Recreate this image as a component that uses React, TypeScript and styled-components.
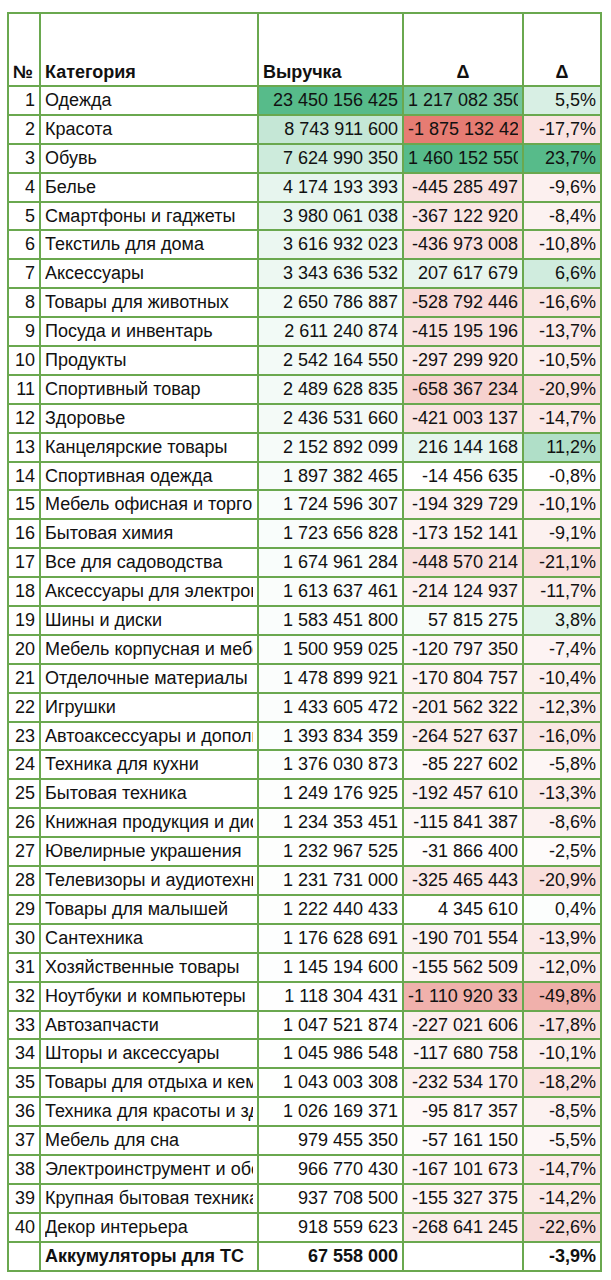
import { createGlobalStyle, styled } from 'styled-components'

type Row = [string, number, string, number, string, number]

// категория / выручка / Δ / Δ% — the numeric copies drive the colour scales
const rows: Row[] = [
  ['Одежда', 23450156425, '1 217 082 350', 1217082350, '5,5%', 5.5],
  ['Красота', 8743911600, '-1 875 132 425', -1875132425, '-17,7%', -17.7],
  ['Обувь', 7624990350, '1 460 152 550', 1460152550, '23,7%', 23.7],
  ['Белье', 4174193393, '-445 285 497', -445285497, '-9,6%', -9.6],
  ['Смартфоны и гаджеты', 3980061038, '-367 122 920', -367122920, '-8,4%', -8.4],
  ['Текстиль для дома', 3616932023, '-436 973 008', -436973008, '-10,8%', -10.8],
  ['Аксессуары', 3343636532, '207 617 679', 207617679, '6,6%', 6.6],
  ['Товары для животных', 2650786887, '-528 792 446', -528792446, '-16,6%', -16.6],
  ['Посуда и инвентарь', 2611240874, '-415 195 196', -415195196, '-13,7%', -13.7],
  ['Продукты', 2542164550, '-297 299 920', -297299920, '-10,5%', -10.5],
  ['Спортивный товар', 2489628835, '-658 367 234', -658367234, '-20,9%', -20.9],
  ['Здоровье', 2436531660, '-421 003 137', -421003137, '-14,7%', -14.7],
  ['Канцелярские товары', 2152892099, '216 144 168', 216144168, '11,2%', 11.2],
  ['Спортивная одежда', 1897382465, '-14 456 635', -14456635, '-0,8%', -0.8],
  ['Мебель офисная и торговая', 1724596307, '-194 329 729', -194329729, '-10,1%', -10.1],
  ['Бытовая химия', 1723656828, '-173 152 141', -173152141, '-9,1%', -9.1],
  ['Все для садоводства', 1674961284, '-448 570 214', -448570214, '-21,1%', -21.1],
  ['Аксессуары для электроники', 1613637461, '-214 124 937', -214124937, '-11,7%', -11.7],
  ['Шины и диски', 1583451800, '57 815 275', 57815275, '3,8%', 3.8],
  ['Мебель корпусная и мебель', 1500959025, '-120 797 350', -120797350, '-7,4%', -7.4],
  ['Отделочные материалы', 1478899921, '-170 804 757', -170804757, '-10,4%', -10.4],
  ['Игрушки', 1433605472, '-201 562 322', -201562322, '-12,3%', -12.3],
  ['Автоаксессуары и дополнительное оборудование', 1393834359, '-264 527 637', -264527637, '-16,0%', -16.0],
  ['Техника для кухни', 1376030873, '-85 227 602', -85227602, '-5,8%', -5.8],
  ['Бытовая техника', 1249176925, '-192 457 610', -192457610, '-13,3%', -13.3],
  ['Книжная продукция и диски', 1234353451, '-115 841 387', -115841387, '-8,6%', -8.6],
  ['Ювелирные украшения', 1232967525, '-31 866 400', -31866400, '-2,5%', -2.5],
  ['Телевизоры и аудиотехника', 1231731000, '-325 465 443', -325465443, '-20,9%', -20.9],
  ['Товары для малышей', 1222440433, '4 345 610', 4345610, '0,4%', 0.4],
  ['Сантехника', 1176628691, '-190 701 554', -190701554, '-13,9%', -13.9],
  ['Хозяйственные товары', 1145194600, '-155 562 509', -155562509, '-12,0%', -12.0],
  ['Ноутбуки и компьютеры', 1118304431, '-1 110 920 337', -1110920337, '-49,8%', -49.8],
  ['Автозапчасти', 1047521874, '-227 021 606', -227021606, '-17,8%', -17.8],
  ['Шторы и аксессуары', 1045986548, '-117 680 758', -117680758, '-10,1%', -10.1],
  ['Товары для отдыха и кемпинга', 1043003308, '-232 534 170', -232534170, '-18,2%', -18.2],
  ['Техника для красоты и здоровья', 1026169371, '-95 817 357', -95817357, '-8,5%', -8.5],
  ['Мебель для сна', 979455350, '-57 161 150', -57161150, '-5,5%', -5.5],
  ['Электроинструмент и оборудование', 966770430, '-167 101 673', -167101673, '-14,7%', -14.7],
  ['Крупная бытовая техника', 937708500, '-155 327 375', -155327375, '-14,2%', -14.2],
  ['Декор интерьера', 918559623, '-268 641 245', -268641245, '-22,6%', -22.6],
]

const GREEN = [87, 187, 138]
const RED = [230, 124, 115]

function tint(t: number, to: number[]) {
  const k = Math.max(0, Math.min(1, t))
  const c = to.map((v) => Math.round(255 + (v - 255) * k))
  return `rgb(${c.join(',')})`
}

const fmt = (n: number) => String(n).replace(/\B(?=(\d{3})+(?!\d))/g, ' ')

const revMin = 918559623
const revMax = 23450156425

const revColor = (v: number) => tint((v - revMin) / (revMax - revMin), GREEN)
const deltaColor = (v: number) =>
  v >= 0 ? tint(v / 1460152550, GREEN) : tint(v / -1875132425, RED)
const pctColor = (v: number) => (v >= 0 ? tint(v / 23.7, GREEN) : tint(-v / 83, RED))

function App() {
  return (
    <>
      <GlobalStyle />
      <Sheet>
        <HeadCell>№</HeadCell>
        <HeadCell>Категория</HeadCell>
        <HeadCell>Выручка</HeadCell>
        <HeadCell $center>Δ</HeadCell>
        <HeadCell $center>Δ</HeadCell>

        {rows.map(([name, rev, delta, deltaVal, pct, pctVal], i) => (
          <Line key={name}>
            <Cell $align="right">
              <Text>{i + 1}</Text>
            </Cell>
            <Cell>
              <Text>{name}</Text>
            </Cell>
            <Cell $align="right" $bg={revColor(rev)}>
              <Text>{fmt(rev)}</Text>
            </Cell>
            <Cell $align="right" $bg={deltaColor(deltaVal)}>
              <Text>{delta}</Text>
            </Cell>
            <Cell $align="right" $bg={pctColor(pctVal)}>
              <Text>{pct}</Text>
            </Cell>
          </Line>
        ))}

        <Cell />
        <Cell $bold>
          <Text>Аккумуляторы для ТС</Text>
        </Cell>
        <Cell $align="right" $bold>
          <Text>67 558 000</Text>
        </Cell>
        <Cell />
        <Cell $align="right" $bold>
          <Text>-3,9%</Text>
        </Cell>
      </Sheet>
    </>
  )
}

const GlobalStyle = createGlobalStyle`
  body {
    margin: 0;
    background: #fff;
    font-family: "Liberation Sans", Arial, sans-serif;
    color: #111;
  }
`

const Sheet = styled.div`
  display: grid;
  grid-template-columns: 30px 216px 143px 118px 76px;
  grid-template-rows: 71px repeat(41, 26.9px);
  gap: 2px;
  padding: 2px;
  width: fit-content;
  margin: 12px 0 0 7px;
  background: #6aa84f;
`

const Line = styled.div`
  display: contents;
`

const HeadCell = styled.div<{ $center?: boolean }>`
  display: flex;
  align-items: flex-end;
  justify-content: ${(p) => (p.$center ? 'center' : 'flex-start')};
  padding: 0 4px 2px;
  background: #fff;
  font-size: 18px;
  font-weight: bold;
  white-space: nowrap;
  overflow: hidden;
`

const Cell = styled.div<{ $align?: 'left' | 'right'; $bold?: boolean; $bg?: string }>`
  min-width: 0;
  padding: 0 4px;
  background: ${(p) => p.$bg || '#fff'};
  font-size: 18px;
  line-height: 26.9px;
  font-weight: ${(p) => (p.$bold ? 'bold' : 'normal')};
  text-align: ${(p) => p.$align || 'left'};
`

// clipped at the content edge, the way the sheet cuts long values
const Text = styled.span`
  display: block;
  overflow: hidden;
  white-space: nowrap;
`

export default App
